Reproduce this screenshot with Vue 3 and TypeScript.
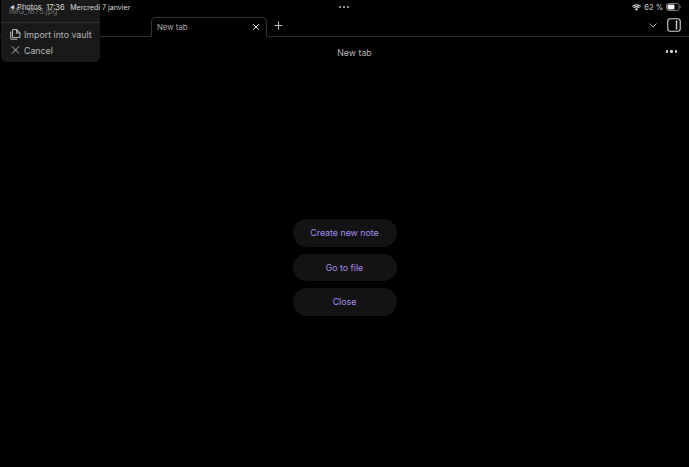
<script setup lang="ts">
const actions: string[] = ['Create new note', 'Go to file', 'Close']
</script>

<template>
  <div class="app">
    <div class="status">
      <div class="status-left">
        <span class="back">◀</span><span>Photos</span><span class="time">17:36</span><span class="date">Mercredi 7 janvier</span>
      </div>
      <div class="dots"><i></i><i></i><i></i></div>
      <div class="status-right">
        <svg width="9" height="7" viewBox="0 0 11 8"><path d="M5.500 8 3.600 5.900a2.800 2.800 0 0 1 3.800 0zM2.700 5 1.600 3.900a5.800 5.800 0 0 1 7.800 0L8.300 5a4.200 4.200 0 0 0-5.600 0zM.8 3 0 2.100a8 8 0 0 1 11 0L10.200 3a6.800 6.800 0 0 0-9.400 0z" fill="#e8e8e8"/></svg>
        <span>62 %</span>
        <svg width="15" height="8" viewBox="0 0 15 8"><rect x=".5" y=".5" width="12.500" height="7" rx="2" fill="none" stroke="#777"/><rect x="1.500" y="1.500" width="7" height="5" rx="1" fill="#eee"/><rect x="13.600" y="2.800" width="1" height="2.400" rx=".5" fill="#777"/></svg>
      </div>
    </div>

    <div class="tabbar">
      <div class="tab">
        <span>New tab</span>
        <svg class="tab-x" width="8" height="8" viewBox="0 0 8 8"><path d="M1 1l6 6M7 1 1 7" stroke="#d4d4d4" stroke-width="1"/></svg>
      </div>
      <svg class="plus" width="9" height="9" viewBox="0 0 9 9"><path d="M4.500 .5v8M.5 4.500h8" stroke="#bdbdbd" stroke-width="1.100"/></svg>
      <div class="tab-tools">
        <svg width="8" height="5" viewBox="0 0 8 5"><path d="M.5.500 4 4 7.500.500" fill="none" stroke="#a8a8a8"/></svg>
        <svg width="14" height="14" viewBox="0 0 14 14"><rect x=".75" y=".75" width="12.500" height="12.500" rx="2.500" fill="none" stroke="#d0d0d0" stroke-width="1.100"/><path d="M9.500 2.500v9" stroke="#d0d0d0" stroke-width="1.400"/></svg>
      </div>
    </div>

    <div class="viewhead">
      <span>New tab</span>
      <div class="more"><i></i><i></i><i></i></div>
    </div>

    <main class="empty">
      <button v-for="a in actions" :key="a" class="action">{{ a }}</button>
    </main>

    <div class="menu">
      <div class="menu-title">IMG_1675.jpg</div>
      <div class="menu-sep"></div>
      <div class="menu-item">
        <svg width="11" height="12" viewBox="0 0 11 12"><path d="M3.500 1.500h3l3.500 3.500v3.500a1 1 0 0 1-1 1h-5.500a1 1 0 0 1-1-1v-6a1 1 0 0 1 1-1z" fill="none" stroke="#b4b4b4" stroke-width="1.100"/><path d="M6.500 1.500v3.500h3.500M.7 3.500v6.300a1.500 1.500 0 0 0 1.500 1.500h5" fill="none" stroke="#b4b4b4" stroke-width="1.100"/></svg>
        <span>Import into vault</span>
      </div>
      <div class="menu-item">
        <svg width="11" height="12" viewBox="0 0 11 12"><path d="M2 2.500l7 7M9 2.500l-7 7" stroke="#b4b4b4" stroke-width="1"/></svg>
        <span>Cancel</span>
      </div>
    </div>
  </div>
</template>

<style scoped>
.app {
  position: relative;
  width: 689px;
  height: 467px;
  overflow: hidden;
  background: #000;
  display: flex;
  flex-direction: column;
  font-family: Inter, "Liberation Sans", sans-serif;
  color: #dadada;
}
.status, .tab, .viewhead, .action, .menu { opacity: 0.999; }
.status {
  height: 12px;
  padding: 1px 8px 0 10px;
  display: flex;
  align-items: center;
  justify-content: space-between;
  font-size: 7.500px;
  color: #d8d8d8;
  flex: none;
  position: relative;
  z-index: 2;
}
.status-left { display: flex; gap: 4.500px; align-items: center; width: 140px; white-space: nowrap; }
.back { font-size: 5px; margin-right: -2px; }
.date { font-size: 7.100px; margin-left: 1px; }
.dots { display: flex; gap: 1.500px; margin-left: -3px; }
.dots i, .more i { display: block; width: 2.500px; height: 2.500px; border-radius: 50%; background: #bdbdbd; }
.status-right { display: flex; align-items: center; gap: 3px; width: 140px; justify-content: flex-end; }
.tabbar {
  height: 23px;
  flex: none;
  border-bottom: 1px solid #2c2c2c;
  display: flex;
  align-items: flex-end;
  padding-left: 151px;
  position: relative;
}
.tab {
  width: 116px;
  height: 20px;
  box-sizing: border-box;
  margin-bottom: -1px;
  border: 1px solid #333;
  border-bottom: 1px solid #000;
  border-radius: 5px 5px 0 0;
  background: #000;
  display: flex;
  align-items: center;
  justify-content: space-between;
  padding: 0 6px 0 5px;
  font-size: 7.800px;
  color: #a8a8a8;
}
.plus { margin: 0 0 6px 7px; }
.tab-tools { margin-left: auto; display: flex; align-items: center; gap: 10px; padding-right: 8px; margin-bottom: 4px; }
.viewhead {
  height: 30px;
  flex: none;
  display: flex;
  align-items: center;
  justify-content: center;
  position: relative;
  padding-left: 20px;
  font-size: 8.800px;
  color: #b4b4b4;
}
.more { position: absolute; right: 12px; top: 13px; display: flex; gap: 1.800px; }
.more i { background: #d8d8d8; }
.empty {
  flex: 1;
  display: flex;
  flex-direction: column;
  align-items: center;
  gap: 7px;
  padding-top: 152px;
}
.action {
  width: 104px;
  height: 27.500px;
  border: none;
  border-radius: 14px;
  background: #131313;
  color: #a48ef0;
  font: inherit;
  font-size: 8.800px;
  padding: 0;
}
.menu {
  position: absolute;
  z-index: 1;
  left: 1px;
  top: 0;
  width: 99px;
  height: 62px;
  box-sizing: border-box;
  background: #191919;
  border-radius: 0 0 6px 6px;
  padding-top: 7px;
}
.menu-title { font-size: 7.800px; color: #6f6f6f; padding-left: 8px; height: 11px; line-height: 9px; }
.menu-sep { height: 1px; background: #2f2f2f; margin: 4px 0 3px; }
.menu-item { display: flex; align-items: center; gap: 3px; padding-left: 9px; height: 16px; font-size: 8.800px; color: #b8b8b8; white-space: nowrap; }
</style>
